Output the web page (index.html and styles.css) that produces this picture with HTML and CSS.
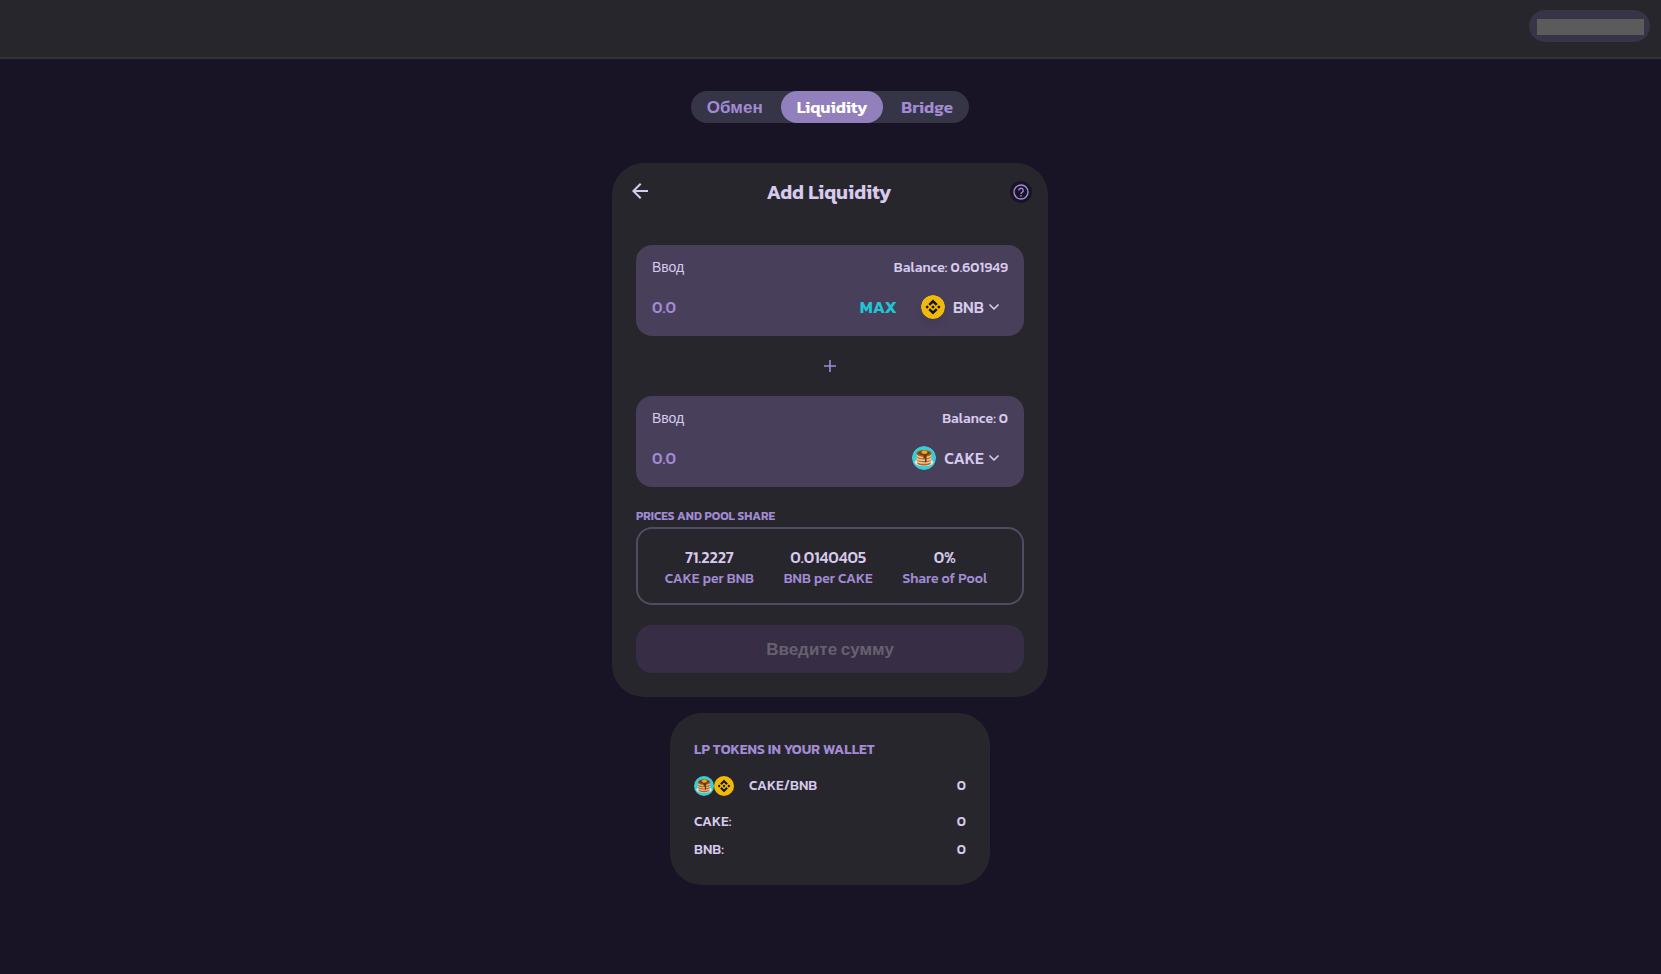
FILE: index.html
```html
<!DOCTYPE html>
<html lang="ru">
<head>
<meta charset="utf-8">
<title>Add Liquidity</title>
<link rel="stylesheet" href="styles.css">
</head>
<body>
<svg class="sprite" aria-hidden="true">
  <symbol id="bnb" viewBox="0 0 32 32">
    <circle cx="16" cy="16" r="16" fill="#f0b90b"/>
    <path fill="#14120c" d="M12.116 14.404L16 10.52l3.886 3.886 2.26-2.26L16 6l-6.144 6.144 2.26 2.26zM6 16l2.260-2.260L10.520 16l-2.260 2.260L6 16zm6.116 1.596L16 21.480l3.886-3.886 2.260 2.259L16 26l-6.144-6.144-.003-.003 2.263-2.257zM21.480 16l2.260-2.260L26 16l-2.260 2.260L21.480 16zm-3.188-.002L16 18.294 13.705 16 16 13.706l2.292 2.292z"/>
  </symbol>
  <symbol id="cake" viewBox="0 0 48 48">
    <circle cx="24" cy="24" r="24" fill="#38ccd6"/>
    <ellipse cx="24" cy="33" rx="19" ry="7.500" fill="#d8cfc8"/>
    <ellipse cx="24" cy="32" rx="18" ry="6.500" fill="#f5efe8"/>
    <path fill="#a8662c" d="M10 14v19c0 3.500 6 6 14 6s14-2.500 14-6V14z"/>
    <path fill="none" stroke="#f0c48a" stroke-width="3" d="M10 18.500c2 3 8 4.500 14 4.500s12-1.500 14-4.500M9 24c2 3 8 4.500 15 4.500S37 27 39 24M9 29.500c2 3 8 4.500 15 4.500s13-1.500 15-4.500"/>
    <ellipse cx="24" cy="14.500" rx="15" ry="6.500" fill="#a65b16"/>
    <ellipse cx="24" cy="14" rx="12" ry="4.500" fill="#7e3f0e"/>
    <path fill="#6e330b" d="M23 17h6v14c0 3-3 3-3 0v-5c0-2-3-2-3 0z"/>
    <path fill="#f1ab1c" d="M19 11l6-2.500 6 2.500-1 4-6 1-5-2z"/>
  </symbol>
  <symbol id="chevron" viewBox="0 0 10 8">
    <path d="M1 2l4 4 4-4" fill="none" stroke="currentColor" stroke-width="1.700" stroke-linecap="round" stroke-linejoin="round"/>
  </symbol>
</svg>

<header class="topbar">
  <button class="account" type="button" aria-label="Account"><span class="account-mask"></span></button>
</header>

<main class="page">
  <nav class="tabs">
    <a class="tab" href="#swap">Обмен</a>
    <a class="tab tab-active" href="#liquidity" aria-current="page">Liquidity</a>
    <a class="tab" href="#bridge">Bridge</a>
  </nav>

  <section class="card">
    <div class="card-head">
      <button class="back" type="button" aria-label="Back">
        <svg width="16" height="16" viewBox="0 0 16 16"><path d="M16 8H1.500M8.700 .7L1.400 8l7.300 7.300" fill="none" stroke="currentColor" stroke-width="2"/></svg>
      </button>
      <h1 class="title">Add Liquidity</h1>
      <button class="help" type="button" aria-label="Help">
        <svg width="16" height="16" viewBox="0 0 16 16" fill="none" stroke="currentColor" stroke-width="1.400"><circle cx="8" cy="8" r="7"/><path d="M5.800 6.500a2.200 2.200 0 1 1 3.500 1.700C8.500 8.800 8 9 8 9.900M8 11v1.500"/></svg>
      </button>
    </div>

    <div class="card-body">
      <div class="panel">
        <div class="row">
          <label class="panel-label" for="amount-a">Ввод</label>
          <span class="balance">Balance: 0.601949</span>
        </div>
        <div class="row">
          <input class="amount" id="amount-a" type="text" placeholder="0.0">
          <button class="max" type="button">MAX</button>
          <button class="token" type="button"><svg class="coin"><use href="#bnb"/></svg><span>BNB</span><svg class="chevron"><use href="#chevron"/></svg></button>
        </div>
      </div>

      <div class="plus">
        <svg width="12" height="12" viewBox="0 0 12 12"><path d="M6 0v12M0 6h12" stroke="currentColor" stroke-width="1.600"/></svg>
      </div>

      <div class="panel">
        <div class="row">
          <label class="panel-label" for="amount-b">Ввод</label>
          <span class="balance">Balance: 0</span>
        </div>
        <div class="row">
          <input class="amount" id="amount-b" type="text" placeholder="0.0">
          <button class="token" type="button"><svg class="coin coin-flat"><use href="#cake"/></svg><span>CAKE</span><svg class="chevron"><use href="#chevron"/></svg></button>
        </div>
      </div>

      <h2 class="prices-title">PRICES AND POOL SHARE</h2>
      <dl class="prices">
        <div class="price"><dd>71.2227</dd><dt>CAKE per BNB</dt></div>
        <div class="price"><dd>0.0140405</dd><dt>BNB per CAKE</dt></div>
        <div class="price"><dd>0%</dd><dt>Share of Pool</dt></div>
      </dl>

      <button class="submit" type="button" disabled>Введите сумму</button>
    </div>
  </section>

  <section class="wallet">
    <h2 class="wallet-title">LP TOKENS IN YOUR WALLET</h2>
    <div class="wallet-row wallet-pair">
      <svg class="coin-small"><use href="#cake"/></svg><svg class="coin-small"><use href="#bnb"/></svg>
      <span class="pair-name">CAKE/BNB</span>
      <span class="value">0</span>
    </div>
    <div class="wallet-row"><span>CAKE:</span><span class="value">0</span></div>
    <div class="wallet-row"><span>BNB:</span><span class="value">0</span></div>
  </section>
</main>
</body>
</html>
```
FILE: styles.css
```css
* { box-sizing: border-box; }

body {
  margin: 0;
  min-height: 100vh;
  background: #191326;
  color: #d7caec;
  font: 500 14px/20px Kanit, "Liberation Sans", sans-serif;
}

h1, h2, dl, dd { margin: 0; }

button, input {
  padding: 0;
  border: 0;
  background: none;
  color: inherit;
  font: inherit;
}

svg { display: block; flex: none; }

.sprite { position: absolute; width: 0; height: 0; }

.topbar {
  display: flex;
  justify-content: flex-end;
  padding: 10px 11px 15px;
  border-bottom: 2px solid #343135;
  background: #27262c;
}

.account {
  padding: 9px 6px 7px 8px;
  height: 32px;
  border-radius: 16px;
  background: #353547;
}

.account-mask {
  display: block;
  width: 107px;
  height: 16px;
  background: #5b5b5b;
}

.page {
  display: flex;
  flex-direction: column;
  align-items: center;
  padding: 32px 1px 88px 0;
}

.tabs {
  display: flex;
  gap: 2px;
  margin-bottom: 40px;
  border-radius: 16px;
  background: #353547;
}

.tab {
  padding: 0 16px;
  border-radius: 16px;
  color: #a28bd4;
  font-size: 17px;
  font-weight: 600;
  line-height: 32px;
  text-align: center;
  text-decoration: none;
}

.tab-active {
  background: #9180bb;
  color: #fff;
}

.card {
  width: 100%;
  max-width: 436px;
  border-radius: 32px;
  background: #27262c;
}

.card-head {
  display: flex;
  align-items: center;
  justify-content: space-between;
  padding: 16px 16px 0 20px;
}

.back, .help { display: flex; align-items: center; justify-content: center; }

.back { padding-bottom: 2px; }

.help {
  width: 22px;
  height: 22px;
  border-radius: 50%;
  background: #191326;
  color: #a28bd4;
}

.title { font-size: 20px; font-weight: 600; line-height: 26px; }

.card-body { padding: 40px 24px 24px; }

.panel {
  padding: 13px 16px;
  border-radius: 16px;
  background: #483f5a;
}

.row { display: flex; align-items: center; justify-content: space-between; }

.row + .row { margin-top: 13px; padding-right: 8px; }

.panel-label { font-weight: 400; }

.amount {
  flex: 1;
  min-width: 0;
  height: 32px;
  outline: 0;
  font-size: 16px;
}

.amount::placeholder { color: #a28bd4; opacity: 1; }

.max {
  margin-right: 24px;
  color: #1fc7d4;
  font-size: 17px;
  font-weight: 600;
}

.token { display: flex; align-items: center; font-size: 16px; }

.coin {
  width: 24px;
  height: 24px;
  margin-right: 8px;
  border-radius: 50%;
  box-shadow: 0 6px 10px rgba(0, 0, 0, .08);
}

.coin-flat { box-shadow: none; }

.chevron { width: 10px; height: 8px; margin: 0 1px 0 5px; }

.plus {
  display: flex;
  justify-content: center;
  padding: 24px 0;
  color: #a28bd4;
}

.prices-title {
  margin-top: 18px;
  color: #a28bd4;
  font-size: 12px;
  font-weight: 600;
  line-height: 22px;
}

.prices {
  display: flex;
  justify-content: space-around;
  padding: 17px 20px 13px 12px;
  border: 2px solid #524b63;
  border-radius: 16px;
  text-align: center;
}

.price { display: flex; flex-direction: column; line-height: 22px; }
.price dd { font-size: 16px; }
.price dt { color: #a28bd4; }

.submit {
  width: 100%;
  height: 48px;
  margin-top: 20px;
  border-radius: 16px;
  background: #372d44;
  color: #666171;
  font-size: 17px;
  font-weight: 600;
}

.wallet {
  width: 100%;
  max-width: 320px;
  margin-top: 16px;
  padding: 25px 24px 21px;
  border-radius: 32px;
  background: #27262c;
}

.wallet-title {
  color: #a28bd4;
  font-size: 14px;
  font-weight: 600;
  line-height: 24px;
}

.wallet-row {
  display: flex;
  align-items: center;
  justify-content: space-between;
  line-height: 28px;
}

.wallet-pair { margin: 10px 0 8px; }

.coin-small { width: 20px; height: 20px; }

.pair-name { margin-left: 15px; }

.wallet-pair .value { margin-left: auto; }
```
